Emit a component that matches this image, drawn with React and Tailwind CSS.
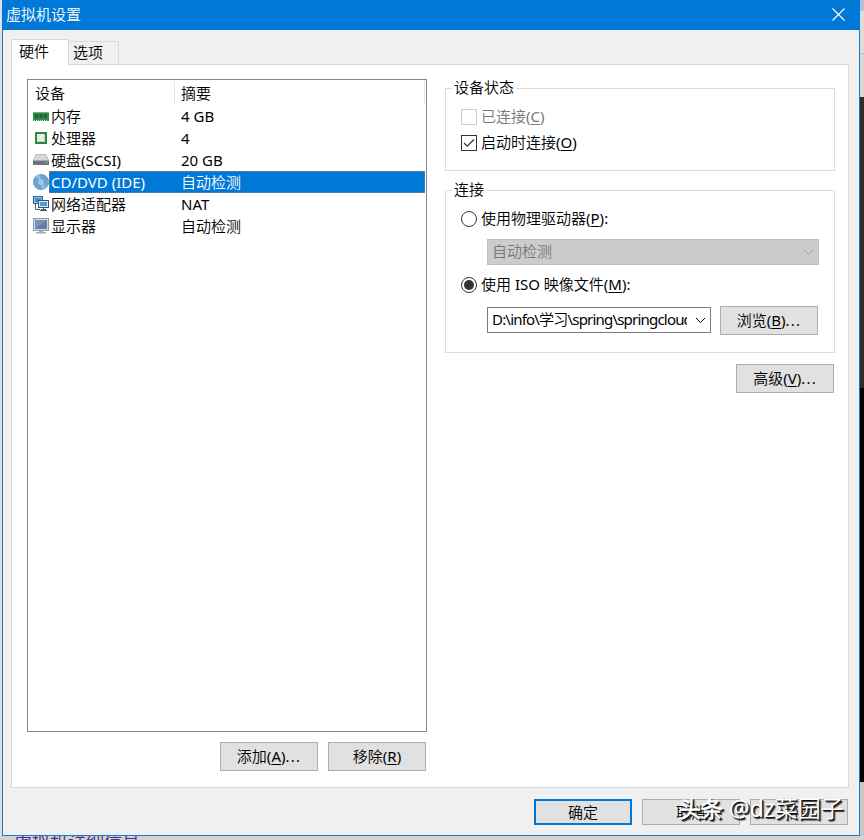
import React, { useState } from "react";

const MemoryIcon = () => (
  <svg width="16" height="16" viewBox="0 0 16 16">
    <path d="M0 4h16v9H0z" fill="#2b8f45" />
    <path d="M0 4.500h16" stroke="#5cba70" />
    <path d="M2 6h3v4H2zM6.500 6h3v4h-3zM11 6h3v4h-3z" fill="#33583f" />
    <path d="M1 12.500h14" stroke="#d3dcae" strokeDasharray="1 1" />
  </svg>
);

const CpuIcon = () => (
  <svg width="16" height="16" viewBox="0 0 16 16">
    <rect x="2" y="2" width="12" height="12" fill="#2a8a41" />
    <rect x="4" y="4" width="8" height="8" fill="#e9eeea" />
    <path d="M4 11.500h8M11.500 4v8" stroke="#bfd6c3" />
  </svg>
);

const DiskIcon = () => (
  <svg width="16" height="16" viewBox="0 0 16 16">
    <path d="M3 2.500h10l2.700 6H.3z" fill="#d3d7db" stroke="#a4a9af" strokeWidth=".7" />
    <rect x="0" y="8" width="16" height="5" rx=".7" fill="#6c737b" />
    <path d="M.5 8.500h15" stroke="#a7acb2" />
    <rect x="12.500" y="10" width="2" height="1.200" fill="#83d36c" />
  </svg>
);

const DiscIcon = () => (
  <svg width="16" height="16" viewBox="0 0 16 16">
    <circle cx="8" cy="8" r="7.700" fill="#6ba6d1" stroke="#5490c0" strokeWidth=".6" />
    <path d="M8 8L3 2.500A7.500 7.500 0 0 1 7 .6zM8 8l5 5.500a7.500 7.500 0 0 1-4 1.900z" fill="#93bfdf" />
    <circle cx="8" cy="8" r="2.700" fill="#b4d4ea" />
    <circle cx="8" cy="8" r="1.200" fill="#fff" stroke="#4c86b3" strokeWidth=".6" />
  </svg>
);

const NetworkIcon = () => (
  <svg width="16" height="16" viewBox="0 0 16 16">
    <rect x=".5" y=".5" width="9" height="7" fill="#8cc8ef" stroke="#3d5f7c" />
    <path d="M2 2h6v4H2z" fill="#3b8fcd" />
    <path d="M2.500 8v5.500H7" stroke="#4a5a68" fill="none" />
    <rect x="5.500" y="4.500" width="10" height="7" fill="#d3eaf8" stroke="#2c567a" />
    <path d="M7 6h7v4H7z" fill="#4a9dda" />
    <path d="M7 14.500h7M8 13.500h5M10.500 12v2" stroke="#4c5964" />
  </svg>
);

const DisplayIcon = () => (
  <svg width="16" height="16" viewBox="0 0 16 16">
    <rect x=".5" y=".5" width="15" height="12" fill="#d5dce5" stroke="#8e9aaa" />
    <rect x="2" y="2" width="12" height="9" fill="#5f7fa6" />
    <path d="M2 2h12L2 11z" fill="#7893b5" />
    <path d="M6 13h4v1h3v1.500H3V14h3z" fill="#a3adb9" />
  </svg>
);

const devices = [
  { name: "内存", summary: "4 GB", Icon: MemoryIcon },
  { name: "处理器", summary: "4", Icon: CpuIcon },
  { name: "硬盘(SCSI)", summary: "20 GB", Icon: DiskIcon },
  { name: "CD/DVD (IDE)", summary: "自动检测", Icon: DiscIcon },
  { name: "网络适配器", summary: "NAT", Icon: NetworkIcon },
  { name: "显示器", summary: "自动检测", Icon: DisplayIcon },
];

// Label with its shortcut letter, e.g. 添加(A)...
const Hotkey = ({ text, letter, tail = "" }) => (
  <span className="whitespace-pre pb-px">
    {text}(<span className="underline underline-offset-2">{letter}</span>)
    <span className="tracking-[1.2px]">{tail}</span>
  </span>
);

const Button = ({ children, className = "h-[29px]" }) => (
  <button
    className={`flex w-[98px] shrink-0 items-center justify-center border border-[#adadad] bg-[#e1e1e1] ${className}`}
  >
    {children}
  </button>
);

const Group = ({ title, children, className }) => (
  <section className={`border border-[#dcdcdc] ${className}`}>
    <h2 className="-mt-[11px] ml-1.5 h-5 w-fit bg-white px-0.5 leading-[19px]">{title}</h2>
    {children}
  </section>
);

const Radio = ({ checked, onChange, children }) => (
  <label className="flex h-5 items-center gap-1">
    <input type="radio" className="sr-only" checked={checked} onChange={onChange} />
    <span className="flex size-4 items-center justify-center rounded-full border border-[#333] bg-white">
      {checked && <span className="size-2.5 rounded-full bg-[#333]" />}
    </span>
    {children}
  </label>
);

const Chevron = () => (
  <svg width="11" height="7" viewBox="0 0 11 7" fill="none" stroke="currentColor" className="shrink-0">
    <path d="M1 1l4.500 4.500L10 1" />
  </svg>
);

const App = () => {
  const [selected, setSelected] = useState(3);
  const [source, setSource] = useState("iso");

  return (
    <div className="relative flex h-[840px] w-[864px] flex-col overflow-hidden bg-[#d3d3d3] font-['Noto_Sans','Noto_Sans_CJK_SC_DemiLight','Noto_Sans_CJK_SC_Light','Noto_Sans_CJK_SC',sans-serif] text-[15px] text-black">
      <div className="flex h-[836px] shrink-0">
        <div className="w-0.5 shrink-0 bg-[#dfe0e2]" />
        <main className="flex w-[858px] shrink-0 flex-col border border-[#187bc9] bg-[#f0f0f0]">
          <header className="-mx-px -mt-px flex h-[30px] shrink-0 items-center justify-between bg-[#0078d7] pb-0.5 pl-1 pr-[15px] text-white">
            <h1>虚拟机设置</h1>
            <svg width="13" height="13" viewBox="0 0 13 13" stroke="white" strokeWidth="1.100">
              <path d="M.5.5l12 12M12.500.5l-12 12" />
            </svg>
          </header>

          <nav className="ml-2 mt-[9px] flex h-[26px] shrink-0 items-end">
            <button className="z-10 -mb-px h-[27px] w-[58px] border border-b-0 border-[#d9d9d9] bg-white pb-1 pl-[7px] text-left leading-[22px]">
              硬件
            </button>
            <button className="-ml-px h-6 w-[51px] border border-b-0 border-[#d9d9d9] pb-0.5 pl-1 text-left leading-[21px]">
              选项
            </button>
          </nav>

          <div className="-mt-px ml-2 flex h-[724px] w-[838px] shrink-0 border border-[#d9d9d9] bg-white pl-[15px] pt-3.5">
            <div className="w-[400px] shrink-0">
              <div className="h-[653px] border border-[#828790]">
                <div className="flex h-[25px] pr-px pt-px leading-6">
                  <div className="w-[147px] border-r border-[#e5e5e5] pl-[7px]">设备</div>
                  <div className="flex-1 border-r border-[#e5e5e5] pl-1.5">摘要</div>
                </div>
                <ul>
                  {devices.map(({ name, summary, Icon }, i) => (
                    <li key={name} className="flex h-[22px] items-center pl-[5px] pr-px" onClick={() => setSelected(i)}>
                      <Icon />
                      <div
                        className={
                          i === selected
                            ? "flex h-[22px] flex-1 items-center border border-dotted border-[#9c7a62] bg-[#0078d7] pl-px text-white"
                            : "flex h-[22px] flex-1 items-center border border-transparent pl-px"
                        }
                      >
                        <span className="w-[130px]">{name}</span>
                        <span>{summary}</span>
                      </div>
                    </li>
                  ))}
                </ul>
              </div>
              <div className="mt-2.5 flex justify-end gap-2.5 pr-px">
                <Button>
                  <Hotkey text="添加" letter="A" tail="..." />
                </Button>
                <Button>
                  <Hotkey text="移除" letter="R" />
                </Button>
              </div>
            </div>

            <div className="ml-[18px] mt-[9px] w-[390px]">
              <Group title="设备状态" className="h-[83px]">
                <div className="ml-[15px] mt-[9px] flex h-5 items-center gap-1 text-[#787878]">
                  <span className="size-4 border border-[#ccc]" />
                  <Hotkey text="已连接" letter="C" />
                </div>
                <div className="ml-[15px] mt-1.5 flex h-5 items-center gap-1">
                  <span className="size-4 border border-[#333]">
                    <svg width="14" height="14" viewBox="0 0 14 14" fill="none" stroke="#333" strokeWidth="1.300">
                      <path d="M2 7l3.200 3.200L12 3.500" />
                    </svg>
                  </span>
                  <Hotkey text="启动时连接" letter="O" />
                </div>
              </Group>

              <Group title="连接" className="mt-[19px] h-[163px]">
                <div className="ml-[15px] mt-[9px]">
                  <Radio checked={source === "drive"} onChange={() => setSource("drive")}>
                    <Hotkey text="使用物理驱动器" letter="P" tail=":" />
                  </Radio>
                  <div className="ml-[26px] mt-2.5 flex h-[26px] w-[332px] items-center justify-between border border-[#bfbfbf] bg-[#ccc] px-1 text-[#787878]">
                    <span className="pb-px">自动检测</span>
                    <span className="text-[#a0a0a0]">
                      <Chevron />
                    </span>
                  </div>
                  <div className="mt-2.5">
                    <Radio checked={source === "iso"} onChange={() => setSource("iso")}>
                      <Hotkey text="使用 ISO 映像文件" letter="M" tail=":" />
                    </Radio>
                  </div>
                  <div className="ml-[26px] mt-[11px] flex h-[29px] gap-[9px]">
                    <div className="mt-px flex h-[26px] w-[224px] items-center justify-between border border-[#7a7a7a] bg-white px-1">
                      <span className="w-[195px] overflow-hidden whitespace-nowrap pb-px tracking-[-0.8px]">
                        D:\info\学习\spring\springcloud
                      </span>
                      <Chevron />
                    </div>
                    <Button>
                      <Hotkey text="浏览" letter="B" tail="..." />
                    </Button>
                  </div>
                </div>
              </Group>
              <div className="mt-[11px] flex justify-end pr-px">
                <Button>
                  <Hotkey text="高级" letter="V" tail="..." />
                </Button>
              </div>
            </div>
          </div>

          <footer className="mr-[11px] mt-[11px] flex shrink-0 justify-end gap-2.5">
            <button className="h-[26px] w-[98px] border-2 border-[#0078d7] bg-[#e1e1e1] leading-[22px]">确定</button>
            <Button className="h-[26px]">取消</Button>
            <Button className="h-[26px]">帮助</Button>
          </footer>
        </main>

        {/* desktop behind the dialog */}
        <div className="flex w-1 shrink-0 flex-col">
          <div className="h-[11px] bg-[#b9bfda]" />
          <div className="h-[43px] border-b border-[#b4bbc8] bg-[#dcdcdc]" />
          <div className="h-[43px] bg-[#d8d8d8]" />
          <div className="h-[291px] bg-[#2d2d2d]" />
          <div className="h-[394px] bg-black" />
          <div className="flex-1 bg-[#c8c8c8]" />
        </div>
      </div>
      <div className="flex h-1 shrink-0 overflow-hidden pl-[14px] text-[18px] leading-5 text-[#45308f]">
        <span className="-mt-[4px] h-5 whitespace-nowrap">虚拟机详细信息</span>
      </div>

      <div className="absolute left-[679px] top-[792px] whitespace-nowrap text-[23px] leading-8 text-white [text-shadow:1px_1px_0_#111,2px_2px_1px_#333]">
        <span className="text-[22px] font-bold">头条</span> @dz菜园子
      </div>
    </div>
  );
};

export default App;
